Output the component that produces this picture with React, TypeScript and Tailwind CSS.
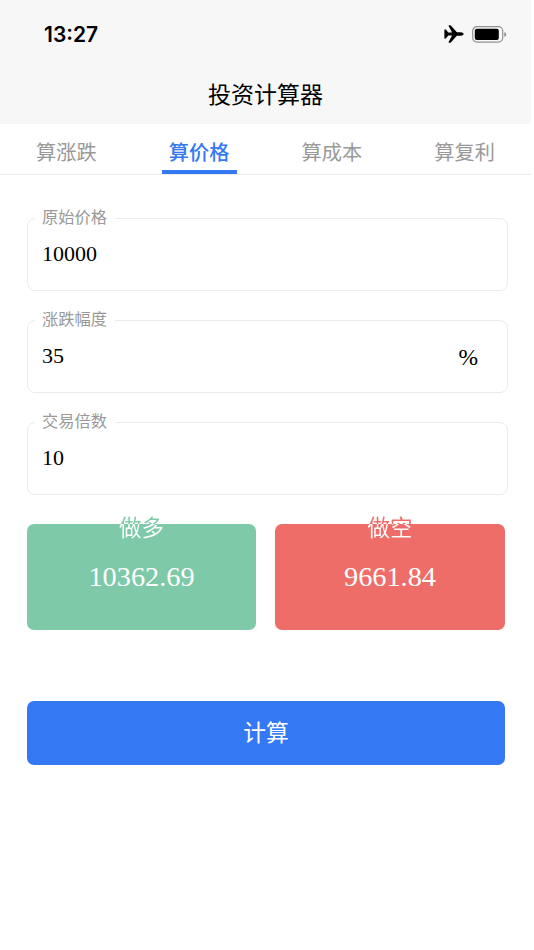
import { useState } from "react";
import clsx from "clsx";

const TABS = ["算涨跌", "算价格", "算成本", "算复利"];

interface FieldProps {
  label: string;
  value: string;
  unit?: string;
  onChange: (value: string) => void;
}

function Field({ label, value, unit, onChange }: FieldProps) {
  return (
    <fieldset className="h-[84px] w-[481px] rounded-lg border border-[#ebebeb] pl-[14px] pr-[29px]">
      <legend className="-ml-[7px] h-[23px] pl-[7px] pr-[8px] text-[16.3px] leading-[18px] text-[#999]">{label}</legend>
      <div className="flex h-[47px] items-center font-['Liberation_Serif',serif] text-[22px] text-black">
        <input
          value={value}
          onChange={(e) => onChange(e.target.value)}
          className="min-w-0 flex-1 bg-transparent outline-none"
        />
        {unit && <span className="pt-[4px] text-[23.5px] leading-none">{unit}</span>}
      </div>
    </fieldset>
  );
}

interface ResultCardProps {
  title: string;
  value: string;
  className: string;
  titleClass: string;
}

// the title straddles the top edge: card colour above it, white below
function ResultCard({ title, value, className, titleClass }: ResultCardProps) {
  return (
    <div className={clsx("flex h-[106px] flex-col items-center rounded-[7px] text-white", className)}>
      <div className={clsx("-mt-[14px] h-[32px] bg-clip-text text-[22.5px] leading-[32px] text-transparent", titleClass)}>
        {title}
      </div>
      <div className="mt-[19px] font-['Liberation_Serif',serif] text-[28.3px] leading-[32px]">{value}</div>
    </div>
  );
}

function StatusBar() {
  return (
    <div className="flex h-[68px] items-center justify-between pl-[44px] pr-[24px]">
      <span className="pt-[1px] font-[Inter,sans-serif] text-[21px] font-semibold leading-none text-black">13:27</span>
      <div className="flex items-center gap-[8px]">
        <svg width="20" height="18" viewBox="0 0 20 18" fill="#000">
          <path d="M0.4 4.6h1.5l2.3 3h3.9L4.6 1.1Q4.3 0.3 5.1 0.3h1q0.5 0 0.9 0.5l5.9 6.5h4.3q2.5 0.4 2.5 1.7t-2.5 1.7h-4.3L7 17.2q-0.4 0.5-0.9 0.5h-1q-0.8 0-0.5-0.8l3.5-6.5H4.2l-2.3 3H0.4V9z" />
        </svg>
        <svg width="35" height="17" viewBox="0 0 35 17">
          <rect x="0.7" y="0.7" width="30" height="15.4" rx="4.3" fill="none" stroke="#929292" strokeWidth="1.2" />
          <rect x="2.8" y="2.8" width="24" height="11.2" rx="2" fill="#000" />
          <path d="M32.3 6q2 0.8 2 2.5t-2 2.5z" fill="#929292" />
        </svg>
      </div>
    </div>
  );
}

export default function App() {
  const [tab, setTab] = useState(1);
  const [price, setPrice] = useState("10000");
  const [change, setChange] = useState("35");
  const [multiple, setMultiple] = useState("10");
  const [result, setResult] = useState({ long: "10362.69", short: "9661.84" });

  const calculate = () => {
    const base = Number(price);
    const rate = Number(change) / 100 / Number(multiple);
    setResult({ long: (base * (1 + rate)).toFixed(2), short: (base * (1 - rate)).toFixed(2) });
  };

  return (
    <div className="min-h-[950px] bg-white font-['Noto_Sans_CJK_SC',sans-serif]">
      <div className="w-[531px]">
        <header className="h-[124px] bg-[#f7f7f7]">
          <StatusBar />
          <h1 className="text-center text-[23px] leading-[50px] text-black">投资计算器</h1>
        </header>

        <nav className="flex h-[51px] border-b border-[#ebebeb]">
          {TABS.map((name, i) => (
            <button
              key={name}
              onClick={() => setTab(i)}
              className={clsx(
                "flex flex-1 flex-col items-center pt-[12px] text-[20.2px] leading-[32px]",
                i === tab ? "font-medium text-[#3478f3]" : "text-[#999]",
              )}
            >
              {name}
              {i === tab && <span className="mt-[2px] h-[4px] w-[75px] bg-[#3478f3]" />}
            </button>
          ))}
        </nav>

        <main className="px-[27px] pt-[32px]">
          <div className="flex flex-col gap-[18px]">
            <Field label="原始价格" value={price} onChange={setPrice} />
            <Field label="涨跌幅度" value={change} unit="%" onChange={setChange} />
            <Field label="交易倍数" value={multiple} onChange={setMultiple} />
          </div>

          <div className="mt-[29px] grid grid-cols-[229px_230px] gap-[19px]">
            <ResultCard
              title="做多"
              value={result.long}
              className="bg-[#7dc9a8]"
              titleClass="bg-[linear-gradient(#7dc9a8_14px,#fff_14px)]"
            />
            <ResultCard
              title="做空"
              value={result.short}
              className="bg-[#ee6d69]"
              titleClass="bg-[linear-gradient(#ee6d69_14px,#fff_14px)]"
            />
          </div>

          <button
            onClick={calculate}
            className="mt-[71px] h-[64px] w-[478px] rounded-[7px] bg-[#3478f3] pb-[2px] text-[22.8px] text-white"
          >
            计算
          </button>
        </main>
      </div>
    </div>
  );
}
